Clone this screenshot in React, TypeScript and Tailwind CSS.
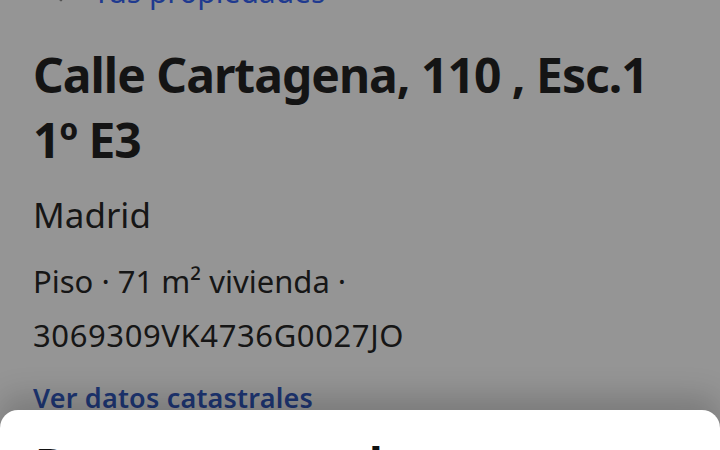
import { ArrowLeft } from 'lucide-react';

export default function App() {
  return (
    <div
      className="relative h-[450px] w-[720px] overflow-hidden bg-[#959595]"
      style={{ fontFamily: '"Noto Sans", "Open Sans", sans-serif' }}
    >
      {/* page behind the sheet */}
      <div className="flex flex-col pl-[33px]">
        <div className="-mt-[24px] flex h-[32px] items-center gap-[18px] pl-[14px] text-[30px] text-[#1f3a8f]">
          <ArrowLeft size={28} strokeWidth={2} className="text-[#555]" />
          <span className="leading-none">Tus propiedades</span>
        </div>

        <h1 className="mt-[34px] text-[48px] font-bold leading-[65px] tracking-[-1px] text-[#141414]">
          Calle Cartagena, 110 , Esc.1
          <br />
          1º E3
        </h1>

        <p className="mt-[23px] text-[35px] leading-[40px] text-[#161616]">Madrid</p>

        <p className="mt-[19px] text-[31px] leading-[54px] text-[#161616]">
          Piso · 71 m² vivienda ·
          <br />
          <span className="tracking-[0.6px]">3069309VK4736G0027JO</span>
        </p>

        <a className="mt-[16px] text-[27px] font-semibold leading-[40px] tracking-[0.2px] text-[#1d3572]">
          Ver datos catastrales
        </a>
      </div>

      {/* bottom sheet */}
      <div className="absolute inset-x-0 top-[410px] h-[200px] rounded-t-[18px] bg-white px-[35px] pt-[24px] shadow-[0_-14px_30px_rgba(0,0,0,0.18)]">
        <h2 className="text-[46px] font-bold leading-[60px] text-[#111]">Datos catastrales</h2>
      </div>
    </div>
  );
}
